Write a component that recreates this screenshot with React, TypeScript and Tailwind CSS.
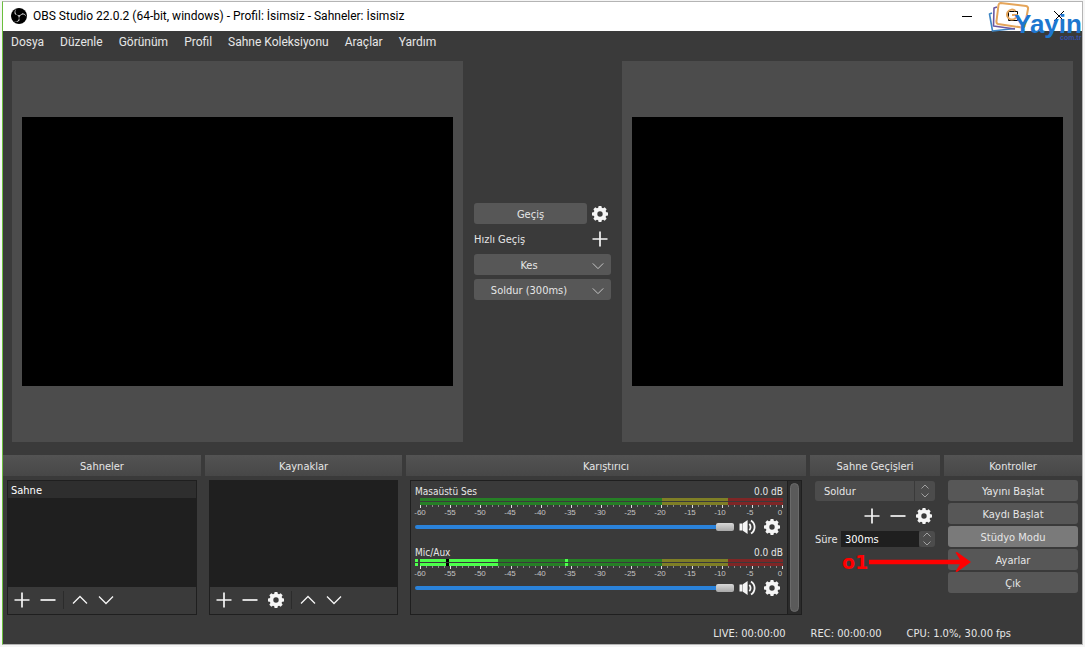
import { useState, type ReactNode } from "react";
import { SiObsstudio } from "react-icons/si";

type IconProps = { className?: string };

function Plus({ className = "size-4" }: IconProps) {
  return (
    <svg viewBox="0 0 16 16" className={className} fill="none" stroke="currentColor" strokeWidth="1.7" aria-hidden="true">
      <path d="M8 0.5V15.5M0.5 8H15.5" />
    </svg>
  );
}

function Minus({ className = "size-4" }: IconProps) {
  return (
    <svg viewBox="0 0 16 16" className={className} fill="none" stroke="currentColor" strokeWidth="1.7" aria-hidden="true">
      <path d="M0.5 8H15.5" />
    </svg>
  );
}

function Chevron({ className = "size-4", up = false }: IconProps & { up?: boolean }) {
  return (
    <svg viewBox="0 0 16 16" className={className} fill="none" stroke="currentColor" strokeWidth="1.3" aria-hidden="true">
      <path d={up ? "M1 11.5L8 4.5L15 11.5" : "M1 4.5L8 11.5L15 4.5"} />
    </svg>
  );
}

function SpinArrows() {
  return (
    <svg viewBox="0 0 8 14" className="h-[14px] w-2" fill="none" stroke="currentColor" aria-hidden="true">
      <path d="M0.5 4.5L4 1L7.5 4.5M0.5 9.5L4 13L7.5 9.5" />
    </svg>
  );
}

function Gear({ className = "size-4" }: IconProps) {
  const teeth = [0, 45, 90, 135, 180, 225, 270, 315];
  return (
    <svg viewBox="0 0 16 16" className={className} fill="currentColor" aria-hidden="true">
      {teeth.map((a) => (
        <path key={a} d="M6 3L6.6 0H9.4L10 3Z" transform={`rotate(${a} 8 8)`} />
      ))}
      <path fillRule="evenodd" d="M8 1.6A6.4 6.4 0 1 1 8 14.4A6.4 6.4 0 1 1 8 1.6ZM8 5.3A2.7 2.7 0 1 0 8 10.7A2.7 2.7 0 1 0 8 5.3Z" />
    </svg>
  );
}

function Speaker() {
  return (
    <svg viewBox="0 0 17 16" className="h-4 w-[17px]" aria-hidden="true">
      <path d="M0.5 4.5H3.5V11.5H0.5ZM3.9 4.3L8.6 1V15L3.9 11.7Z" fill="currentColor" />
      <path d="M10.3 4.8C12 6.5 12 9.5 10.3 11.2M12 1.4C16.8 4.6 16.8 11.4 12 14.6" fill="none" stroke="currentColor" strokeWidth="1.8" />
    </svg>
  );
}

function IconButton({ label, children }: { label: string; children: ReactNode }) {
  return (
    <button type="button" aria-label={label} className="flex size-4 shrink-0 items-center justify-center text-[#f5f5f5]">
      {children}
    </button>
  );
}

function Watermark() {
  return (
    <div className="pointer-events-none absolute top-0 right-0 h-11 w-[96px]">
      <svg viewBox="0 0 44 36" className="absolute top-0 left-0 h-9 w-11" fill="none" strokeWidth="1.6" strokeLinejoin="round" aria-hidden="true">
        <path d="M6 11L3.5 12L6.5 29L29 26.5" stroke="#3f86c4" />
        <path d="M11 5L8 6L7.5 24L29 27" stroke="#6a58a0" />
        <path d="M14.5 1L40 4Q42.5 4.500 42 7L39 23Q38.500 25.500 36 25.500L12 22Q10 21.500 10.500 19L12.500 3Q13 1 14.500 1Z" stroke="#e5a55a" strokeWidth="2" />
        <path d="M29.500 9A5 5 0 1 0 31 13H26" stroke="#e5a55a" strokeWidth="2" />
      </svg>
      <span className="absolute top-2 left-7 font-['Liberation_Sans',sans-serif] text-[26px] leading-7 font-bold text-[#1d77cf]">Yayin</span>
      <span className="absolute top-8 left-[74px] font-['Liberation_Sans',sans-serif] text-[7px] leading-[8px] font-bold text-[#3450ac]">com.tr</span>
    </div>
  );
}

function TitleBar() {
  return (
    <header className="relative flex h-[29px] items-center bg-white pb-[2px] pl-2 text-black">
      <div className="flex size-4 items-center justify-center overflow-hidden rounded-full bg-black">
        <SiObsstudio className="size-[18px] shrink-0 text-[#dcdcdc]" aria-hidden="true" />
      </div>
      <h1 className="ml-[6px] font-['Roboto',sans-serif] text-[12px]">OBS Studio 22.0.2 (64-bit, windows) - Profil: İsimsiz - Sahneler: İsimsiz</h1>
      <div className="ml-auto flex h-full">
        <button type="button" aria-label="Simge durumuna küçült" className="flex w-[46px] items-center justify-center">
          <svg viewBox="0 0 10 10" className="size-[10px]" stroke="currentColor"><path d="M0 5.5H10" /></svg>
        </button>
        <button type="button" aria-label="Ekranı kapla" className="flex w-[46px] items-center justify-center">
          <svg viewBox="0 0 10 10" className="size-[10px]" fill="none" stroke="currentColor"><path d="M0.5 0.5H9.5V9.5H0.5Z" /></svg>
        </button>
        <button type="button" aria-label="Kapat" className="flex w-[46px] items-center justify-center">
          <svg viewBox="0 0 10 10" className="size-[10px]" stroke="currentColor"><path d="M0 0L10 10M10 0L0 10" /></svg>
        </button>
      </div>
      <Watermark />
    </header>
  );
}

function Preview() {
  return (
    <section className="flex min-w-0 flex-1 items-center bg-[#4c4c4c] px-[10px]">
      <div className="aspect-[431/269] w-full bg-black" />
    </section>
  );
}

const buttonStyle = "h-[21px] rounded-[3px] bg-[#575757] pt-[2px] leading-[19px] text-center";

function TransitionColumn() {
  return (
    <div className="flex w-[159px] shrink-0 flex-col justify-center gap-1 px-[11px]">
      <div className="flex items-center gap-[5px] pr-[3px]">
        <button type="button" className={`${buttonStyle} flex-1`}>Geçiş</button>
        <IconButton label="Geçiş ayarları"><Gear /></IconButton>
      </div>
      <div className="flex h-[22px] items-center justify-between pr-[3px]">
        <span className="pt-[2px]">Hızlı Geçiş</span>
        <IconButton label="Hızlı geçiş ekle"><Plus /></IconButton>
      </div>
      {["Kes", "Soldur (300ms)"].map((name) => (
        <button key={name} type="button" className={`${buttonStyle} flex items-center pr-[7px]`}>
          <span className="flex-1 pr-4">{name}</span>
          <Chevron className="-ml-2 size-3 text-[#c8c8c8]" />
        </button>
      ))}
    </div>
  );
}

function Dock({ title, children }: { title: string; children: ReactNode }) {
  return (
    <section className="flex min-w-0 flex-col gap-1">
      <h2 className="h-[21px] bg-linear-to-b from-[#535353] to-[#474747] pt-px text-center leading-[22px]">{title}</h2>
      <div className="relative flex flex-1 flex-col px-1">{children}</div>
    </section>
  );
}

function ListDock({ title, items, gear = false }: { title: string; items: string[]; gear?: boolean }) {
  return (
    <Dock title={title}>
      <div className="flex h-[135px] flex-col border border-[#1f1f1f]">
        <ul className="flex-1 bg-[#1f1f1f]">
          {items.map((item) => (
            <li key={item} className="h-[17px] bg-[#2e2e2e] pt-px pl-[3px] leading-[18px] text-white">{item}</li>
          ))}
        </ul>
        <div className="flex h-[27px] items-center gap-[10px] pb-px pl-[6px]">
          <IconButton label="Ekle"><Plus /></IconButton>
          <IconButton label="Kaldır"><Minus /></IconButton>
          {gear && <IconButton label="Özellikler"><Gear /></IconButton>}
          <div className="-mr-[2px] -ml-[3px] h-[18px] w-px bg-[#2b2b2b]" />
          <IconButton label="Yukarı taşı"><Chevron up /></IconButton>
          <IconButton label="Aşağı taşı"><Chevron /></IconButton>
        </div>
      </div>
    </Dock>
  );
}

function Meter({ active }: { active: boolean }) {
  const ticks = Array.from({ length: 61 }, (_, i) => i);
  return (
    <div>
      <svg viewBox="0 0 368 11" preserveAspectRatio="none" className="h-[11px] w-full" shapeRendering="crispEdges" aria-hidden="true">
        {[0, 4].map((y) => (
          <g key={y}>
            <rect x="5" y={y} width="242" height="3" fill="#267f26" />
            <rect x="247" y={y} width="66" height="3" fill="#7f7f26" />
            <rect x="313" y={y} width="55" height="3" fill="#7f2626" />
            {active && (
              <>
                <rect x="0" y={y} width="3" height="3" fill="#4cff4c" />
                <rect x="5" y={y} width="78" height="3" fill="#4cff4c" />
                <rect x="31" y={y} width="3" height="3" fill="#000" />
                <rect x="150" y={y} width="3" height="3" fill="#4cff4c" />
              </>
            )}
          </g>
        ))}
        {ticks.map((t) => (
          <rect key={t} x={Math.round(5 + t * 6.035)} y="7" width="1" height={t % 5 === 0 ? 3 : 2} fill={t % 5 === 0 ? "#e0e0e0" : "#8a8a8a"} />
        ))}
      </svg>
      <div className="flex h-2 justify-between pr-[3px] pl-[5px] font-['Liberation_Sans',sans-serif] text-[8px] leading-[8px] text-[#c4c4c4]">
        {["-60", "-55", "-50", "-45", "-40", "-35", "-30", "-25", "-20", "-15", "-10", "-5", "0"].map((n) => (
          <span key={n} className="flex w-0 justify-center">{n}</span>
        ))}
      </div>
    </div>
  );
}

function Channel({ name, active = false }: { name: string; active?: boolean }) {
  const [level, setLevel] = useState(100);
  return (
    <div className="flex h-[61px] flex-col pt-[3px] pr-1 pl-1">
      <div className="flex h-[14px] items-center justify-between text-[10px]">
        <span>{name}</span>
        <span>0.0 dB</span>
      </div>
      <Meter active={active} />
      <div className="flex h-5 items-center">
        <input
          type="range"
          aria-label={name}
          value={level}
          onChange={(e) => setLevel(Number(e.target.value))}
          className="h-2 min-w-0 flex-1 appearance-none bg-transparent [&::-webkit-slider-runnable-track]:h-1 [&::-webkit-slider-runnable-track]:rounded-full [&::-webkit-slider-runnable-track]:bg-[#2a82da] [&::-webkit-slider-thumb]:-mt-[2px] [&::-webkit-slider-thumb]:h-2 [&::-webkit-slider-thumb]:w-[18px] [&::-webkit-slider-thumb]:appearance-none [&::-webkit-slider-thumb]:rounded-[2px] [&::-webkit-slider-thumb]:bg-linear-to-b [&::-webkit-slider-thumb]:from-[#d8d8d8] [&::-webkit-slider-thumb]:to-[#a8a8a8]"
        />
        <button type="button" aria-label="Sesi kapat" className="ml-[5px] text-[#f5f5f5]"><Speaker /></button>
        <div className="ml-2 pr-[3px]"><IconButton label="Ses ayarları"><Gear /></IconButton></div>
      </div>
    </div>
  );
}

function MixerDock() {
  return (
    <Dock title="Karıştırıcı">
      <div className="flex h-[135px] border border-[#1f1f1f]">
        <div className="min-w-0 flex-1">
          <Channel name="Masaüstü Ses" />
          <Channel name="Mic/Aux" active />
        </div>
        <div className="w-[14px] border-l border-[#1f1f1f] bg-[#2b2b2b] px-[2px] py-[2px]">
          <div className="h-full w-[9px] rounded-full border border-[#6a6a6a] bg-[#5a5a5a]" />
        </div>
      </div>
    </Dock>
  );
}

function TransitionsDock() {
  return (
    <Dock title="Sahne Geçişleri">
      <div className="flex flex-col px-px pt-px">
        <div className="relative">
          <select aria-label="Sahne Geçişleri" className="h-5 w-full appearance-none rounded-[3px] bg-[#4c4c4c] pt-[2px] pl-[9px] leading-[18px]">
            <option>Soldur</option>
          </select>
          <div className="pointer-events-none absolute top-0 right-0 flex h-5 w-[21px] items-center justify-center border-l border-[#3a3a3a] text-[#a0a0a0]">
            <SpinArrows />
          </div>
        </div>
        <div className="flex h-[30px] items-center justify-end gap-[10px] pr-[3px]">
          <IconButton label="Geçiş ekle"><Plus /></IconButton>
          <IconButton label="Geçişi kaldır"><Minus /></IconButton>
          <IconButton label="Geçiş özellikleri"><Gear /></IconButton>
        </div>
        <div className="flex h-4 items-center">
          <label htmlFor="duration" className="w-[26px] pt-[2px]">Süre</label>
          <input id="duration" defaultValue="300ms" className="h-4 min-w-0 flex-1 bg-[#1f1f1f] pt-[2px] pl-1 text-white" />
          <div className="flex h-4 w-4 items-center justify-center rounded-[3px] bg-[#4c4c4c] text-[#a0a0a0]">
            <SpinArrows />
          </div>
        </div>
      </div>
      <div className="pointer-events-none absolute top-[70px] left-[32px] z-10 flex items-center gap-px text-[#ff0000]">
        <span className="font-['DejaVu_Sans',sans-serif] text-[19px] leading-6 font-bold">o1</span>
        <svg viewBox="0 0 102 20" className="h-5 w-[102px]" fill="currentColor" aria-hidden="true">
          <path d="M0 7.800H91L86.500 0.500L88 0L102 10L88 20L86.500 19.500L91 12.200H0Z" />
        </svg>
      </div>
    </Dock>
  );
}

function ControlsDock() {
  return (
    <Dock title="Kontroller">
      <div className="flex flex-col gap-[2px]">
        {["Yayını Başlat", "Kaydı Başlat", "Stüdyo Modu", "Ayarlar", "Çık"].map((name) => (
          <button key={name} type="button" className={name === "Stüdyo Modu" ? "h-[21px] rounded-[3px] bg-[#7a7a7a] pt-[2px] leading-[19px] text-center" : buttonStyle}>
            {name}
          </button>
        ))}
      </div>
    </Dock>
  );
}

export default function App() {
  return (
    <div className="flex min-h-screen flex-col bg-[#f5f5f5] pt-px pr-[2px] pb-[2px] pl-[2px]">
      <main className="flex flex-1 flex-col border border-[#b4b4b4] border-l-[#6abf3c] bg-[#3a3a3a] font-['DejaVu_Sans_Condensed','DejaVu_Sans',sans-serif] text-[11px] text-[#e6e6e6]">
        <TitleBar />
        <nav className="flex h-[22px] items-center gap-4 pl-2 font-['Roboto',sans-serif] text-[12px]">
          {["Dosya", "Düzenle", "Görünüm", "Profil", "Sahne Koleksiyonu", "Araçlar", "Yardım"].map((name) => (
            <button key={name} type="button">{name}</button>
          ))}
        </nav>
        <div className="flex flex-1 px-[9px] pt-2 pb-[13px]">
          <Preview />
          <TransitionColumn />
          <Preview />
        </div>
        <div className="grid grid-cols-[198fr_197fr_400fr_130fr_138fr] gap-1">
          <ListDock title="Sahneler" items={["Sahne"]} />
          <ListDock title="Kaynaklar" items={[]} gear />
          <MixerDock />
          <TransitionsDock />
          <ControlsDock />
        </div>
        <footer className="flex h-[29px] items-center justify-end gap-[25px] pt-[10px] pr-[71px]">
          <span>LIVE: 00:00:00</span>
          <span>REC: 00:00:00</span>
          <span>CPU: 1.0%, 30.00 fps</span>
        </footer>
      </main>
    </div>
  );
}
